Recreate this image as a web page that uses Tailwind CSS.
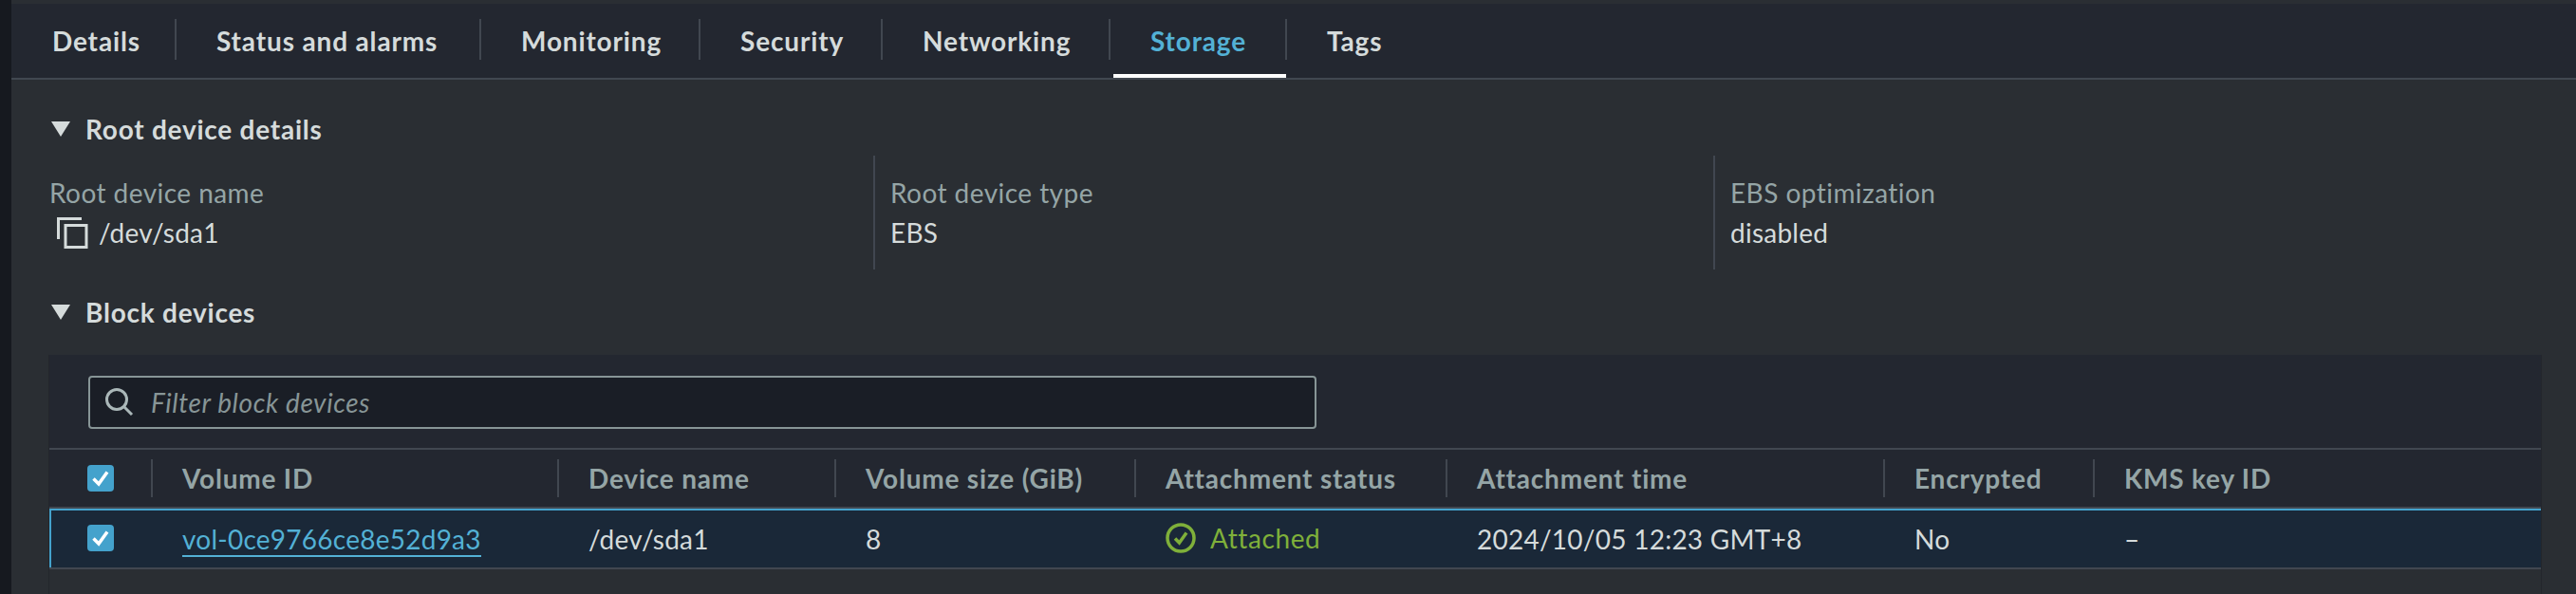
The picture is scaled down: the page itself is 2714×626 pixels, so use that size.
<!DOCTYPE html>
<html lang="en">
<head>
  <meta charset="UTF-8">
  <title>Storage</title>
  <script src="https://cdn.jsdelivr.net/npm/@tailwindcss/browser@4"></script>
</head>
<body class="bg-[#16191f] font-['Lato','Liberation_Sans',sans-serif] text-[28px] leading-[36px] text-[#d5dbdb] tracking-[0.25px]">
<div class="flex w-[2714px] h-[626px] overflow-hidden">
  <div class="w-3 shrink-0"></div>
  <main class="flex-1 flex flex-col bg-[#2a2e33] pt-1">

    <!-- tabs -->
    <nav class="flex h-[80px] shrink-0 bg-[#232730] border-b-2 border-[#414750] font-bold tracking-[0.85px]">
      <div class="w-[174px] h-[78px] pl-[43px] flex items-center relative"><span>Details</span><i class="absolute right-0 top-[16px] h-[43px] border-r-2 border-[#414750]"></i></div>
      <div class="w-[321px] h-[78px] pl-[42px] flex items-center relative"><span>Status and alarms</span><i class="absolute right-0 top-[16px] h-[43px] border-r-2 border-[#414750]"></i></div>
      <div class="w-[231px] h-[78px] pl-[42px] flex items-center relative"><span>Monitoring</span><i class="absolute right-0 top-[16px] h-[43px] border-r-2 border-[#414750]"></i></div>
      <div class="w-[192px] h-[78px] pl-[42px] flex items-center relative"><span>Security</span><i class="absolute right-0 top-[16px] h-[43px] border-r-2 border-[#414750]"></i></div>
      <div class="w-[240px] h-[78px] pl-[42px] flex items-center relative"><span>Networking</span><i class="absolute right-0 top-[16px] h-[43px] border-r-2 border-[#414750]"></i></div>
      <div class="w-[186px] h-[78px] pl-[42px] flex items-center relative text-[#53b1d5]"><span>Storage</span><i class="absolute right-0 top-[16px] h-[43px] border-r-2 border-[#414750]"></i><b class="absolute left-[3px] right-[1px] bottom-0 h-1 bg-white"></b></div>
      <div class="h-[78px] pl-[42px] flex items-center"><span>Tags</span></div>
    </nav>

    <!-- root device details -->
    <h2 class="mt-8 ml-[42px] h-10 flex items-center gap-[16px] font-bold tracking-[0.75px]">
      <svg class="w-5 h-4" viewBox="0 0 20 16"><path d="M0 0h20L10 16z" fill="#d5dbdb"/></svg>
      <span>Root device details</span>
    </h2>
    <div class="mt-2 ml-[40px] grid grid-cols-[868px_885px_1fr] h-[120px]">
      <div class="pt-[21px]">
        <div class="text-[#95a5a6] tracking-[0.45px]">Root device name</div>
        <div class="mt-[6px] flex items-center h-9">
          <svg class="ml-[7px] w-[34px] h-[34px] mr-[11px]" viewBox="0 0 34 34" fill="none" stroke="#d5dbdb" stroke-width="3"><path d="M2.5 24V2.5H27"/><rect x="10" y="9.5" width="22" height="23"/></svg>
          <span>/dev/sda1</span>
        </div>
      </div>
      <div class="border-l-2 border-[#414750] pl-[16px] pt-[21px]">
        <div class="text-[#95a5a6] tracking-[0.45px]">Root device type</div>
        <div class="mt-[6px]">EBS</div>
      </div>
      <div class="border-l-2 border-[#414750] pl-[16px] pt-[21px]">
        <div class="text-[#95a5a6] tracking-[0.45px]">EBS optimization</div>
        <div class="mt-[6px]">disabled</div>
      </div>
    </div>

    <!-- block devices -->
    <h2 class="mt-[25px] ml-[42px] h-10 flex items-center gap-[16px] font-bold tracking-[0.75px]">
      <svg class="w-5 h-4" viewBox="0 0 20 16"><path d="M0 0h20L10 16z" fill="#d5dbdb"/></svg>
      <span>Block devices</span>
    </h2>
    <section class="mt-[25px] ml-[39px] w-[2627px] flex-1 border-x border-[#23262c]">
      <div class="bg-[#232730] pt-[22px] pb-5 pl-[41px]">
        <div class="w-[1294px] h-[56px] rounded border-2 border-[#879596] bg-[#1a1e26] flex items-center pl-[15px] gap-[17px]">
          <svg class="w-[32px] h-[32px]" viewBox="0 0 32 32" fill="none" stroke="#aab7b8" stroke-width="3"><circle cx="13" cy="13" r="10.5"/><path d="M20.5 20.5L29 29"/></svg>
          <span class="italic text-[#879596] tracking-[0.6px]">Filter block devices</span>
        </div>
      </div>

      <div class="grid grid-cols-[107px_428px_292px_316px_328px_461px_221px_1fr] items-center h-[64px] bg-[#232730] border-y-2 border-[#414750] font-bold text-[#95a5a6] tracking-[0.8px]">
        <div class="pl-[40px] flex">
          <span class="w-7 h-7 rounded bg-[#44a2cc] flex items-center justify-center">
            <svg class="w-5 h-5" viewBox="0 0 20 20" fill="none" stroke="#fff" stroke-width="3.5"><path d="M2.5 10.5L8 16L17 3.5"/></svg>
          </span>
        </div>
        <div class="h-10 border-l-2 border-[#414750] pl-[31px] flex items-center">Volume ID</div>
        <div class="h-10 border-l-2 border-[#414750] pl-[31px] flex items-center">Device name</div>
        <div class="h-10 border-l-2 border-[#414750] pl-[31px] flex items-center">Volume size (GiB)</div>
        <div class="h-10 border-l-2 border-[#414750] pl-[31px] flex items-center">Attachment status</div>
        <div class="h-10 border-l-2 border-[#414750] pl-[31px] flex items-center">Attachment time</div>
        <div class="h-10 border-l-2 border-[#414750] pl-[31px] flex items-center">Encrypted</div>
        <div class="h-10 border-l-2 border-[#414750] pl-[31px] flex items-center">KMS key ID</div>
      </div>

      <div class="grid grid-cols-[107px_428px_292px_316px_328px_461px_221px_1fr] items-center h-[64px] bg-[#1a2838] border-b-2 border-[#414750] shadow-[inset_2px_2px_0_#44a2cc]">
        <div class="pl-[40px] flex">
          <span class="w-7 h-7 rounded bg-[#44a2cc] flex items-center justify-center">
            <svg class="w-5 h-5" viewBox="0 0 20 20" fill="none" stroke="#fff" stroke-width="3.5"><path d="M2.5 10.5L8 16L17 3.5"/></svg>
          </span>
        </div>
        <div class="pl-[33px] pt-[2px]"><a class="text-[#53b1d5] border-b-2 border-[#53b1d5] inline-block leading-[34px]">vol-0ce9766ce8e52d9a3</a></div>
        <div class="pl-[33px] pt-[2px]">/dev/sda1</div>
        <div class="pl-[33px] pt-[2px]">8</div>
        <div class="pl-[33px] flex items-center gap-[15px] text-[#7fb03a]">
          <svg class="w-8 h-8" viewBox="0 0 32 32" fill="none" stroke="#7fb03a"><circle cx="16" cy="16" r="14" stroke-width="3.5"/><path d="M10 16.5L14.5 21L22 10.5" stroke-width="3.5"/></svg>
          <span class="tracking-[0.6px]">Attached</span>
        </div>
        <div class="pl-[33px] pt-[2px]">2024/10/05 12:23 GMT+8</div>
        <div class="pl-[33px] pt-[2px]">No</div>
        <div class="pl-[33px] pt-[2px]">–</div>
      </div>
    </section>
  </main>
</div>
</body>
</html>
